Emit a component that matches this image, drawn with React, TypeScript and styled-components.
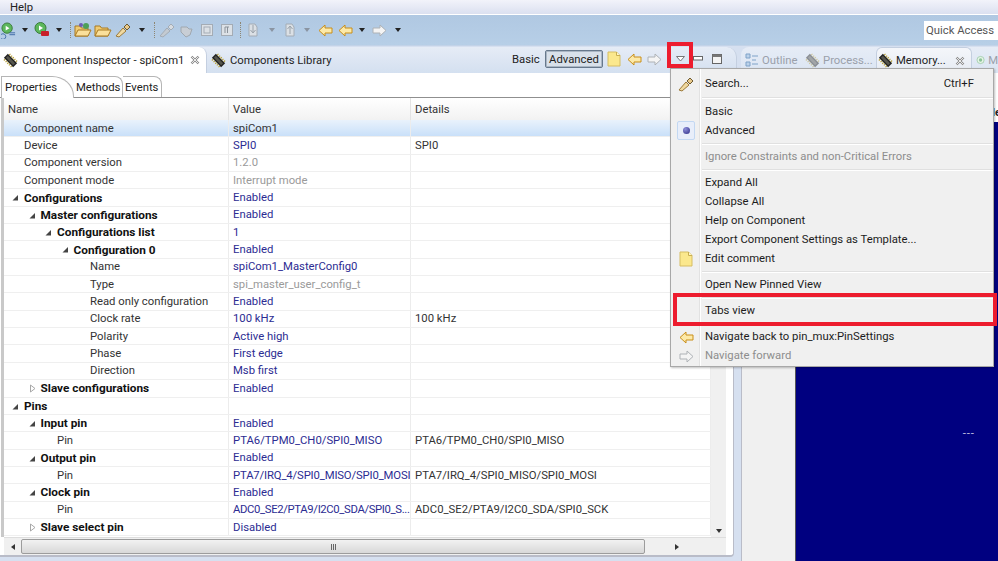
import React from 'react';
import styled, { createGlobalStyle } from 'styled-components';

const GlobalStyle = createGlobalStyle`
  html, body { margin: 0; padding: 0; background: #fff; }
  body { font-family: Roboto, "Noto Sans", sans-serif; font-size: 11.3px; color: #1e1e1e; }
`;

const Page = styled.div`
  position: relative;
  width: 998px;
  height: 561px;
  overflow: hidden;
  display: flex;
  flex-direction: column;
  background: #d6e0f0;
`;

const MenuBar = styled.div`
  height: 14px;
  padding-left: 10px;
  display: flex;
  align-items: center;
  background: linear-gradient(#f2f3fa, #dbe0f0);
  border-bottom: 1px solid #fff;
  color: #222;
`;

const Toolbar = styled.div`
  height: 30px;
  display: flex;
  align-items: center;
  padding-left: 1px;
  background: linear-gradient(#b0c8e2, #b7cfe7);
  border-bottom: 1px solid #c3d3e8;
`;

const Slot = styled.div<{ $w: number }>`
  width: ${(p) => p.$w}px;
  height: 18px;
  flex: none;
  display: flex;
  align-items: center;
  justify-content: center;
`;

const DropCaret = styled.div<{ $off?: boolean }>`
  width: 0;
  height: 0;
  border-left: 3.5px solid transparent;
  border-right: 3.5px solid transparent;
  border-top: 4px solid ${(p) => (p.$off ? '#8a94a2' : '#222')};
`;

const DotSep = styled.div`
  width: 0;
  height: 16px;
  border-left: 1px dotted #8d8672;
`;

const QuickAccess = styled.div`
  margin-left: auto;
  width: 72px;
  height: 19px;
  background: #fff;
  color: #555;
  display: flex;
  align-items: center;
  padding-left: 2px;
  white-space: nowrap;
`;

const Workbench = styled.div`
  flex: 1;
  display: flex;
  min-height: 0;
  padding-top: 1px;
`;

const LeftPane = styled.div`
  width: 737px;
  flex: none;
  display: flex;
  flex-direction: column;
`;

const TabStrip = styled.div`
  height: 26px;
  flex: none;
  display: flex;
  align-items: stretch;
  background: linear-gradient(#e6ecf6, #d4e0f0);
  border-top-right-radius: 10px;
  border-right: 1px solid #c4cfe0;
`;

const ActiveTab = styled.div`
  width: 207px;
  display: flex;
  align-items: center;
  background: #fff;
  border-top-right-radius: 8px;
  border-right: 1px solid #c4cfe0;
  padding-left: 3px;
  gap: 4px;
  box-sizing: border-box;
  white-space: nowrap;
`;

const IdleTab = styled.div`
  display: flex;
  align-items: center;
  gap: 4px;
  padding-left: 4px;
  white-space: nowrap;
`;

const CloseMark = styled.span`
  margin-left: auto;
  padding-right: 6px;
  display: flex;
`;

const ViewTools = styled.div`
  margin-left: auto;
  display: flex;
  align-items: center;
  padding: 0 9px 2px 0;
`;

const ModeLabel = styled.span`
  width: 33px;
  color: #222;
`;

const ModeButton = styled.span`
  width: 58px;
  height: 18px;
  box-sizing: border-box;
  display: flex;
  align-items: center;
  justify-content: center;
  border: 1px solid #67788c;
  border-radius: 2px;
  background: #d8e0ea;
  box-shadow: inset 0 0 0 1px #aab6c4;
  margin-right: 1px;
`;

const DropTool = styled.div`
  width: 25px;
  height: 18px;
  box-sizing: border-box;
  padding-left: 12px;
  display: flex;
  align-items: center;
`;

const ContentFrame = styled.div`
  flex: 1;
  min-height: 0;
  display: flex;
  flex-direction: column;
  box-sizing: border-box;
  background: #fff;
  border-right: 1px solid #b9bcc8;
  border-bottom: 2px solid #b9bcc8;
  margin: 0 3px 4px 0;
  padding-right: 7px;
  border-bottom-right-radius: 4px;
`;

const SubTabs = styled.div`
  height: 25px;
  flex: none;
  padding: 3px 0 0 1px;
  box-sizing: border-box;
  display: flex;
  align-items: stretch;
  border-bottom: 1px solid #8f8f8f;
`;

const SubTab = styled.div<{ $active?: boolean; $w: number }>`
  width: ${(p) => p.$w}px;
  box-sizing: border-box;
  display: flex;
  align-items: center;
  padding-left: ${(p) => (p.$active ? 3 : 2)}px;
  margin-bottom: ${(p) => (p.$active ? -1 : 0)}px;
  background: #fff;
  border: 1px solid #b5b5b5;
  border-bottom: none;
  border-left: ${(p) => (p.$active ? '1px solid #b5b5b5' : 'none')};
  border-top-right-radius: ${(p) => (p.$active ? '22px 20px' : '8px')};
  color: #222;
`;

const TableArea = styled.div`
  flex: 1;
  min-height: 0;
  display: flex;
  border-left: 3px solid #c9c9c9;
  margin-left: 1px;
  border-right: 1px solid #c9c9c9;
`;

const TableMain = styled.div`
  width: 707px;
  flex: none;
  overflow: hidden;
`;

const HeaderRow = styled.div`
  height: 22px;
  display: grid;
  grid-template-columns: 225px 182px 1fr;
  background: linear-gradient(#fff, #f2f2f2);
  color: #333;
`;

const HeaderCell = styled.div`
  display: flex;
  align-items: center;
  padding-left: 4px;
  border-right: 1px solid #e3e3e3;
`;

const Row = styled.div<{ $selected?: boolean }>`
  height: 17.35px;
  box-sizing: border-box;
  display: grid;
  grid-template-columns: 225px 182px 1fr;
  border-bottom: 1px solid #efefef;
  background: ${(p) => (p.$selected ? 'linear-gradient(#e9f2fc, #c9e0f9)' : '#fff')};
`;

const Cell = styled.div`
  display: flex;
  align-items: center;
  padding-left: 4px;
  border-right: 1px solid #ececec;
  white-space: nowrap;
  overflow: hidden;
`;

const NameCell = styled(Cell)<{ $level: number; $bold?: boolean }>`
  position: relative;
  padding-left: ${(p) => 20 + p.$level * 16.5}px;
  font-weight: ${(p) => (p.$bold ? 700 : 400)};
  font-size: ${(p) => (p.$bold ? 11.8 : 11.3)}px;
  color: ${(p) => (p.$bold ? '#111' : '#333')};
`;

const Twist = styled.svg<{ $level: number }>`
  position: absolute;
  top: 4px;
  left: ${(p) => 7 + p.$level * 16.5}px;
`;

const ValueCell = styled(Cell)<{ $tone: string; $squeeze?: number }>`
  letter-spacing: ${(p) => -(p.$squeeze ?? 0)}px;
  color: ${(p) => (p.$tone === 'link' ? '#2c2c92' : p.$tone === 'muted' ? '#9a9a9a' : '#333')};
`;

const VScroll = styled.div`
  width: 15px;
  flex: none;
  background: #f0f0f0;
  display: flex;
  flex-direction: column;
  justify-content: flex-end;
  align-items: center;
  padding-bottom: 4px;
  box-sizing: border-box;
  margin-top: 22px;
`;

const HScroll = styled.div`
  height: 17px;
  flex: none;
  display: flex;
  align-items: center;
  background: #f0f0f0;
  border-top: 1px solid #dedede;
  margin-left: 4px;
`;

const ScrollEnd = styled.div<{ $w: number }>`
  width: ${(p) => p.$w}px;
  flex: none;
  display: flex;
  justify-content: center;
`;

const Thumb = styled.div`
  width: 624px;
  height: 15px;
  box-sizing: border-box;
  display: flex;
  align-items: center;
  justify-content: center;
  gap: 1px;
  border: 1px solid #9c9c9c;
  border-radius: 2px;
  background: linear-gradient(#f2f2f2, #d8d8d8);
`;

const Grip = styled.span`
  width: 1px;
  height: 6px;
  background: #666;
`;

const Triangle = styled.span<{ $dir: 'left' | 'right' | 'down' }>`
  width: 0;
  height: 0;
  ${(p) =>
    p.$dir === 'left'
      ? 'border-right: 4px solid #333; border-top: 3px solid transparent; border-bottom: 3px solid transparent;'
      : p.$dir === 'right'
      ? 'border-left: 4px solid #333; border-top: 3px solid transparent; border-bottom: 3px solid transparent;'
      : 'border-top: 4px solid #333; border-left: 3px solid transparent; border-right: 3px solid transparent;'}
`;

const RightPane = styled.div`
  flex: 1;
  min-width: 0;
  display: flex;
  flex-direction: column;
  padding-left: 4px;
`;

const RightTabs = styled.div`
  height: 26px;
  flex: none;
  display: flex;
  align-items: stretch;
  background: linear-gradient(#e6ecf6, #dbe5f3);
  border-top-left-radius: 8px;
  white-space: nowrap;
  overflow: hidden;
`;

const RightTab = styled.div<{ $w: number; $active?: boolean }>`
  width: ${(p) => p.$w}px;
  flex: none;
  box-sizing: border-box;
  display: flex;
  align-items: center;
  gap: 3px;
  padding-left: ${(p) => (p.$active ? 1 : 4)}px;
  color: ${(p) => (p.$active ? '#222' : '#9aa0aa')};
  background: ${(p) => (p.$active ? 'linear-gradient(#f4f6fa, #e6ebf3)' : 'transparent')};
  border: ${(p) => (p.$active ? '1px solid #c4cfe0' : 'none')};
  border-bottom: none;
  border-radius: 6px 6px 0 0;
`;

const RightBody = styled.div`
  flex: 1;
  min-height: 0;
  display: flex;
  background: #fff;
  border-left: 1px solid #b9bcc8;
`;

const GrayColumn = styled.div`
  width: 53px;
  flex: none;
  background: #f0f0f0;
  border-right: 1px solid #555;
`;

const NavyArea = styled.div`
  flex: 1;
  background: #000080;
  margin-top: 49px;
  display: flex;
  justify-content: flex-end;
  padding: 305px 23px 0 0;
  color: #c4c4e4;
  line-height: 14px;
  letter-spacing: 1px;
`;

const CutLabel = styled.span`
  position: absolute;
  left: 992px;
  top: 106px;
  font-weight: 700;
  color: #222;
`;

const PopupMenu = styled.div`
  position: absolute;
  left: 670px;
  top: 68px;
  width: 324px;
  height: 299px;
  box-sizing: border-box;
  padding-top: 5px;
  background: #f0f0f0;
  border: 1px solid #a8a8a8;
  box-shadow: 1px 1px 2px rgba(0, 0, 0, 0.25);
`;

const Gutter = styled.div`
  position: absolute;
  left: 28px;
  top: 0;
  bottom: 0;
  width: 1px;
  background: #e2e2e2;
  border-right: 1px solid #fff;
`;

const MenuItem = styled.div<{ $off?: boolean }>`
  position: relative;
  height: 19px;
  display: flex;
  align-items: center;
  padding-left: 34px;
  padding-right: 19px;
  color: ${(p) => (p.$off ? '#8d8d8d' : '#1c1c1c')};
`;

const MenuIcon = styled.span`
  position: absolute;
  left: 6px;
  top: 1px;
  width: 18px;
  height: 18px;
  display: flex;
  align-items: center;
  justify-content: center;
`;

const RadioBox = styled(MenuIcon)`
  box-sizing: border-box;
  border: 1px solid #c3d8f2;
  border-radius: 2px;
  background: #e8eefa;
  top: 0;
  height: 19px;
`;

const RadioDot = styled.span`
  width: 7px;
  height: 7px;
  border-radius: 50%;
  background: radial-gradient(circle at 35% 30%, #8f8fd8, #2b2b86);
`;

const Shortcut = styled.span`
  margin-left: auto;
`;

const MenuSep = styled.div<{ $h?: number }>`
  height: ${(p) => p.$h ?? 7}px;
  display: flex;
  align-items: center;
  &::after {
    content: '';
    margin-left: 31px;
    flex: 1;
    height: 1px;
    background: #e0e0e0;
    border-bottom: 1px solid #fff;
  }
`;

const RedBox = styled.div<{ $x: number; $y: number; $w: number; $h: number }>`
  position: absolute;
  left: ${(p) => p.$x}px;
  top: ${(p) => p.$y}px;
  width: ${(p) => p.$w}px;
  height: ${(p) => p.$h}px;
  box-sizing: border-box;
  border: 4px solid #ed1c2e;
`;

const Chip = ({ faded }: { faded?: boolean }) => (
  <svg width="15" height="15" viewBox="0 0 16 16" style={{ flex: 'none', opacity: faded ? 0.45 : 1 }}>
    <g transform="rotate(-45 8 8)">
      <rect x="5" y="1" width="6" height="14" fill="#222" />
      <path d="M3 3h2M3 5.5h2M3 8h2M3 10.5h2M3 13h2M11 3h2M11 5.5h2M11 8h2M11 10.5h2M11 13h2" stroke="#b9a23c" strokeWidth="1.2" />
      <rect x="6.5" y="2.5" width="3" height="11" fill="#55554c" />
    </g>
  </svg>
);

const Note = () => (
  <svg width="14" height="16" viewBox="0 0 14 16">
    <path d="M1 1h8.5L13 4.5V15H1z" fill="#fbe88d" stroke="#d6bd62" />
    <path d="M9.5 1v3.5H13" fill="#fff7c9" stroke="#c9ae50" />
  </svg>
);

const Arrow = ({ dir, off }: { dir: 'left' | 'right'; off?: boolean }) => (
  <svg width="15" height="13" viewBox="0 0 15 13">
    <path
      d="M1 6.5 7 1v3h7v5H7v3z"
      fill={off ? '#f4f4f4' : '#fce9a8'}
      stroke={off ? '#aeb2b6' : '#c98e18'}
      transform={dir === 'right' ? 'matrix(-1 0 0 1 15 0)' : undefined}
    />
  </svg>
);

const Cross = () => (
  <svg width="10" height="10" viewBox="0 0 10 10">
    <path d="M1.5 1.5 8.5 8.5M8.5 1.5 1.5 8.5" stroke="#8a8a8a" strokeWidth="2.4" />
    <path d="M1.5 1.5 8.5 8.5M8.5 1.5 1.5 8.5" stroke="#f4f4f4" strokeWidth="0.9" />
  </svg>
);

const ViewMenuCaret = () => (
  <svg width="9" height="6" viewBox="0 0 9 6">
    <path d="M.5.5h8L4.5 5z" fill="#fff" stroke="#777" />
  </svg>
);

const Run = ({ red }: { red?: boolean }) => (
  <svg width="16" height="18" viewBox="0 0 16 18">
    <circle cx="6.5" cy="7" r="5.5" fill="#5cb85c" stroke="#3b7a3b" />
    <path d="M5 4.5 9 7 5 9.5z" fill="#fff" />
    {red ? (
      <rect x="7" y="10" width="8" height="5" rx="1" fill="#c8202a" />
    ) : (
      <path d="M9 12h6M9 14h6M2 13a3 3 0 1 0 .1 0" stroke="#3d6aa5" fill="none" />
    )}
  </svg>
);

const Folder = ({ badge }: { badge?: boolean }) => (
  <svg width="18" height="16" viewBox="0 0 18 16">
    <path d="M1 4h5l1.5 2H14v8H1z" fill="#f0cb72" stroke="#a87a22" />
    <path d="M1 14 4 8h13l-3 6z" fill="#fae09b" stroke="#a87a22" />
    {badge && <circle cx="12" cy="4" r="3" fill="#4c9f58" />}
    {badge && <circle cx="7" cy="3" r="2" fill="#6d5bb0" />}
  </svg>
);

const Wand = ({ off }: { off?: boolean }) => (
  <svg width="18" height="16" viewBox="0 0 18 16">
    <path d="M2 14 9 6l3 3-7 6z" fill={off ? '#c3cad1' : '#f0d9a0'} stroke={off ? '#a4acb5' : '#9c7a3a'} />
    <path d="M10 5 13 2l3 3-3 3z" fill={off ? '#d7dce1' : '#e9c98a'} stroke={off ? '#a4acb5' : '#6d5a32'} />
  </svg>
);

const GrayTool = ({ kind }: { kind: number }) => (
  <svg width="16" height="16" viewBox="0 0 16 16">
    {kind === 0 && <path d="M2 5h6l2 2h3l-2 6-4 2-5-5z" fill="#c8ced5" stroke="#a0a8b0" />}
    {kind === 1 && <rect x="2.5" y="2.5" width="11" height="11" fill="#dce1e6" stroke="#a4acb5" />}
    {kind === 1 && <rect x="5" y="5" width="6" height="6" fill="none" stroke="#a4acb5" />}
    {kind === 2 && <rect x="2.5" y="2.5" width="11" height="11" fill="#dce1e6" stroke="#a4acb5" />}
    {kind === 2 && <path d="M6 11V5h4M8.5 5v6" stroke="#8a929a" fill="none" />}
    {kind === 3 && <path d="M4 14V2h6l2 3v9z" fill="#dbe0e5" stroke="#a4acb5" />}
    {kind === 3 && <path d="M8 3v7M5.5 8 8 11l2.5-3" stroke="#9aa2aa" fill="none" />}
    {kind === 4 && <path d="M4 14V2h6l2 3v9z" fill="#dbe0e5" stroke="#a4acb5" />}
    {kind === 4 && <path d="M8 12V5M5.5 7 8 4l2.5 3" stroke="#9aa2aa" fill="none" />}
  </svg>
);

const Minimize = () => (
  <svg width="11" height="6" viewBox="0 0 11 6">
    <rect x="0.5" y="0.5" width="9" height="3.5" fill="#fff" stroke="#666" />
  </svg>
);

const Maximize = () => (
  <svg width="11" height="11" viewBox="0 0 11 11">
    <rect x="0.5" y="0.5" width="9" height="9" fill="#f4f4f4" stroke="#666" />
    <rect x="0.5" y="0.5" width="9" height="2.5" fill="#777" />
  </svg>
);

const OutlineIcon = () => (
  <svg width="14" height="14" viewBox="0 0 14 14">
    <path d="M1 1h4v4H1zM1 9h4v4H1zM7 3h6M7 11h6M7 7h4" fill="#bcd2ea" stroke="#7ea2c8" />
  </svg>
);

const GreenDot = () => (
  <svg width="14" height="14" viewBox="0 0 14 14">
    <circle cx="7" cy="7" r="5.5" fill="#e6f3e6" stroke="#8cc49a" />
    <circle cx="7" cy="7" r="2.5" fill="#8cc49a" />
  </svg>
);

type RowData = {
  name: string;
  level: number;
  bold?: boolean;
  twist?: 'open' | 'closed';
  value: string;
  tone?: 'link' | 'muted' | 'plain';
  details?: string;
  squeeze?: number;
};

const rows: RowData[] = [
  { name: 'Component name', level: 0, value: 'spiCom1', tone: 'plain' },
  { name: 'Device', level: 0, value: 'SPI0', details: 'SPI0' },
  { name: 'Component version', level: 0, value: '1.2.0', tone: 'muted' },
  { name: 'Component mode', level: 0, value: 'Interrupt mode', tone: 'muted' },
  { name: 'Configurations', level: 0, bold: true, twist: 'open', value: 'Enabled' },
  { name: 'Master configurations', level: 1, bold: true, twist: 'open', value: 'Enabled' },
  { name: 'Configurations list', level: 2, bold: true, twist: 'open', value: '1' },
  { name: 'Configuration 0', level: 3, bold: true, twist: 'open', value: 'Enabled' },
  { name: 'Name', level: 4, value: 'spiCom1_MasterConfig0' },
  { name: 'Type', level: 4, value: 'spi_master_user_config_t', tone: 'muted' },
  { name: 'Read only configuration', level: 4, value: 'Enabled' },
  { name: 'Clock rate', level: 4, value: '100 kHz', details: '100 kHz' },
  { name: 'Polarity', level: 4, value: 'Active high' },
  { name: 'Phase', level: 4, value: 'First edge' },
  { name: 'Direction', level: 4, value: 'Msb first' },
  { name: 'Slave configurations', level: 1, bold: true, twist: 'closed', value: 'Enabled' },
  { name: 'Pins', level: 0, bold: true, twist: 'open', value: '' },
  { name: 'Input pin', level: 1, bold: true, twist: 'open', value: 'Enabled' },
  { name: 'Pin', level: 2, value: 'PTA6/TPM0_CH0/SPI0_MISO', details: 'PTA6/TPM0_CH0/SPI0_MISO' },
  { name: 'Output pin', level: 1, bold: true, twist: 'open', value: 'Enabled' },
  { name: 'Pin', level: 2, value: 'PTA7/IRQ_4/SPI0_MISO/SPI0_MOSI', details: 'PTA7/IRQ_4/SPI0_MISO/SPI0_MOSI', squeeze: 0.15 },
  { name: 'Clock pin', level: 1, bold: true, twist: 'open', value: 'Enabled' },
  { name: 'Pin', level: 2, value: 'ADC0_SE2/PTA9/I2C0_SDA/SPI0_S...', details: 'ADC0_SE2/PTA9/I2C0_SDA/SPI0_SCK', squeeze: 0.35 },
  { name: 'Slave select pin', level: 1, bold: true, twist: 'closed', value: 'Disabled' },
];

const App: React.FC = () => (
  <Page>
    <GlobalStyle />
    <MenuBar>Help</MenuBar>
    <Toolbar>
      <Slot $w={15}><Run /></Slot>
      <Slot $w={18}><DropCaret /></Slot>
      <Slot $w={16}><Run red /></Slot>
      <Slot $w={18}><DropCaret /></Slot>
      <Slot $w={5}><DotSep /></Slot>
      <Slot $w={20}><Folder badge /></Slot>
      <Slot $w={20}><Folder /></Slot>
      <Slot $w={20}><Wand /></Slot>
      <Slot $w={18}><DropCaret /></Slot>
      <Slot $w={6}><DotSep /></Slot>
      <Slot $w={20}><Wand off /></Slot>
      <Slot $w={20}><GrayTool kind={0} /></Slot>
      <Slot $w={20}><GrayTool kind={1} /></Slot>
      <Slot $w={20}><GrayTool kind={2} /></Slot>
      <Slot $w={6}><DotSep /></Slot>
      <Slot $w={20}><GrayTool kind={3} /></Slot>
      <Slot $w={18}><DropCaret $off /></Slot>
      <Slot $w={18}><GrayTool kind={4} /></Slot>
      <Slot $w={16}><DropCaret $off /></Slot>
      <Slot $w={20}><Arrow dir="left" /></Slot>
      <Slot $w={20}><Arrow dir="left" /></Slot>
      <Slot $w={13}><DropCaret /></Slot>
      <Slot $w={22}><Arrow dir="right" off /></Slot>
      <Slot $w={15}><DropCaret /></Slot>
      <QuickAccess>Quick Access</QuickAccess>
    </Toolbar>
    <Workbench>
      <LeftPane>
        <TabStrip>
          <ActiveTab>
            <Chip />
            Component Inspector - spiCom1
            <CloseMark><Cross /></CloseMark>
          </ActiveTab>
          <IdleTab>
            <Chip />
            Components Library
          </IdleTab>
          <ViewTools>
            <ModeLabel>Basic</ModeLabel>
            <ModeButton>Advanced</ModeButton>
            <Slot $w={20}><Note /></Slot>
            <Slot $w={20}><Arrow dir="left" /></Slot>
            <Slot $w={20}><Arrow dir="right" off /></Slot>
            <DropTool><ViewMenuCaret /></DropTool>
            <Slot $w={18}><Minimize /></Slot>
            <Slot $w={20}><Maximize /></Slot>
          </ViewTools>
        </TabStrip>
        <ContentFrame>
          <SubTabs>
            <SubTab $active $w={73}>Properties</SubTab>
            <SubTab $w={49}>Methods</SubTab>
            <SubTab $w={39}>Events</SubTab>
          </SubTabs>
          <TableArea>
            <TableMain>
              <HeaderRow>
                <HeaderCell>Name</HeaderCell>
                <HeaderCell>Value</HeaderCell>
                <HeaderCell>Details</HeaderCell>
              </HeaderRow>
              {rows.map((r, i) => (
                <Row key={i} $selected={i === 0}>
                  <NameCell $level={r.level} $bold={r.bold}>
                    {r.twist && (
                      <Twist $level={r.level} width="8" height="9" viewBox="0 0 8 9">
                        {r.twist === 'open' ? (
                          <path d="M7 2v5.5H1.5z" fill="#444" />
                        ) : (
                          <path d="M2.5 1 7 4.5 2.5 8z" fill="#fff" stroke="#a8a8a8" />
                        )}
                      </Twist>
                    )}
                    {r.name}
                  </NameCell>
                  <ValueCell $tone={r.tone ?? 'link'} $squeeze={r.squeeze}>{r.value}</ValueCell>
                  <ValueCell $tone="plain">{r.details}</ValueCell>
                </Row>
              ))}
            </TableMain>
            <VScroll><Triangle $dir="down" /></VScroll>
          </TableArea>
          <HScroll>
            <ScrollEnd $w={17}><Triangle $dir="left" /></ScrollEnd>
            <Thumb><Grip /><Grip /><Grip /></Thumb>
            <ScrollEnd $w={63}><Triangle $dir="right" /></ScrollEnd>
          </HScroll>
        </ContentFrame>
      </LeftPane>
      <RightPane>
        <RightTabs>
          <RightTab $w={60}><OutlineIcon />Outline</RightTab>
          <RightTab $w={75}><Chip faded />Process...</RightTab>
          <RightTab $w={96} $active><Chip />Memory...<CloseMark><Cross /></CloseMark></RightTab>
          <RightTab $w={26}><GreenDot />M</RightTab>
        </RightTabs>
        <RightBody>
          <GrayColumn />
          <NavyArea>---</NavyArea>
        </RightBody>
      </RightPane>
    </Workbench>
    <CutLabel>le</CutLabel>
    <PopupMenu>
      <Gutter />
      <MenuItem>
        <MenuIcon><Wand /></MenuIcon>
        Search...
        <Shortcut>Ctrl+F</Shortcut>
      </MenuItem>
      <MenuSep $h={9} />
      <MenuItem>Basic</MenuItem>
      <MenuItem>
        <RadioBox><RadioDot /></RadioBox>
        Advanced
      </MenuItem>
      <MenuSep />
      <MenuItem $off>Ignore Constraints and non-Critical Errors</MenuItem>
      <MenuSep />
      <MenuItem>Expand All</MenuItem>
      <MenuItem>Collapse All</MenuItem>
      <MenuItem>Help on Component</MenuItem>
      <MenuItem>Export Component Settings as Template...</MenuItem>
      <MenuItem>
        <MenuIcon><Note /></MenuIcon>
        Edit comment
      </MenuItem>
      <MenuSep />
      <MenuItem>Open New Pinned View</MenuItem>
      <MenuSep />
      <MenuItem>Tabs view</MenuItem>
      <MenuSep />
      <MenuItem>
        <MenuIcon><Arrow dir="left" /></MenuIcon>
        Navigate back to pin_mux:PinSettings
      </MenuItem>
      <MenuItem $off>
        <MenuIcon><Arrow dir="right" off /></MenuIcon>
        Navigate forward
      </MenuItem>
    </PopupMenu>
    <RedBox $x={667} $y={42} $w={26} $h={26} />
    <RedBox $x={673} $y={293} $w={324} $h={33} />
  </Page>
);

export default App;
